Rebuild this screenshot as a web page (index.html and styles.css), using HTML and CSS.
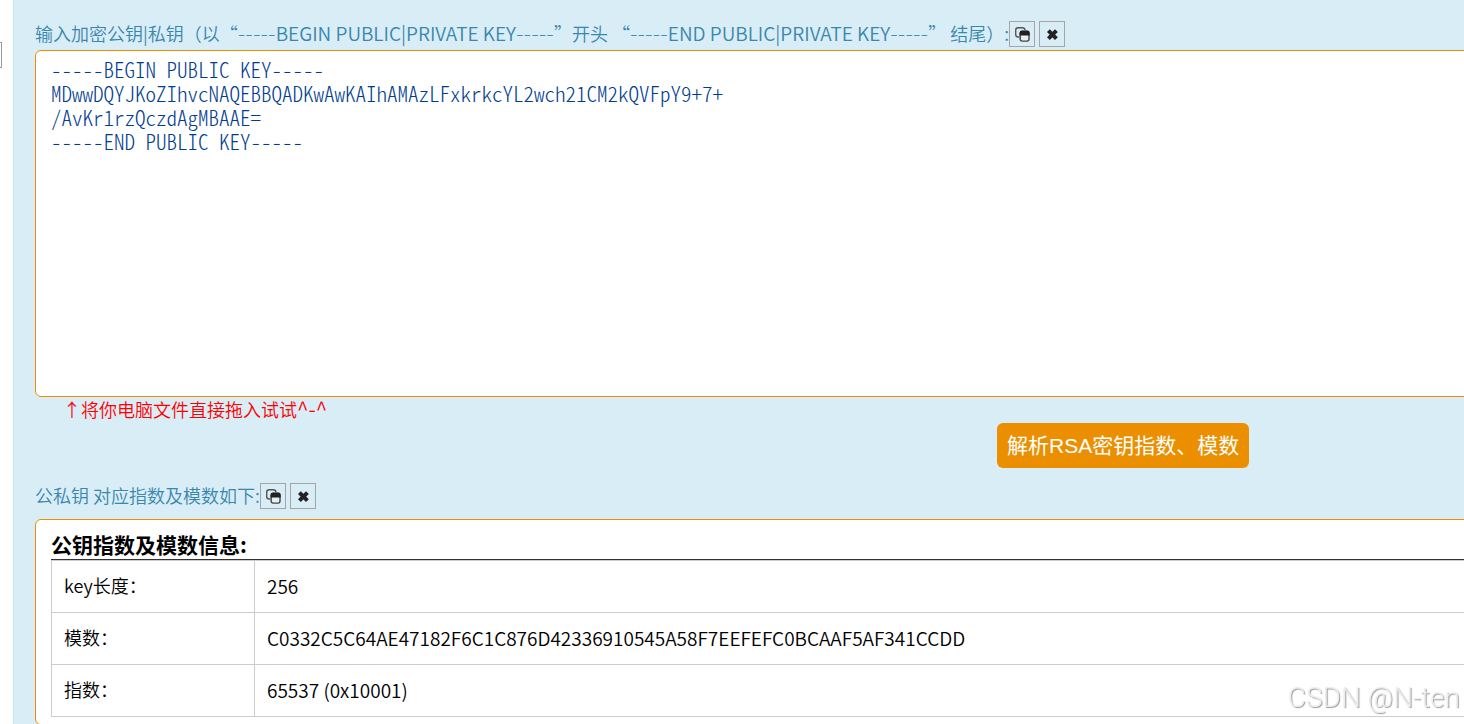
FILE: index.html
```html
<!DOCTYPE html>
<html lang="zh-CN">
<head>
<meta charset="utf-8">
<title>RSA密钥指数、模数解析</title>
<link rel="stylesheet" href="styles.css">
</head>
<body>
<svg class="symbols" aria-hidden="true">
  <symbol id="icon-copy" viewBox="0 0 16 16">
    <path d="M5.500 11H4.200Q1.700 11 1.700 8.500V4.200Q1.700 1.700 4.200 1.700H8.300Q10.800 1.700 11 4" fill="none" stroke="#555" stroke-width="1.400"/>
    <rect x="6.200" y="5.500" width="8.800" height="9.600" rx="2" fill="#e3f0f5" stroke="#444" stroke-width="1.400"/>
    <path d="M5.500 9.400V7Q5.500 4.600 7.900 4.600H13.300Q15.700 4.600 15.700 7V9.400Z" fill="#222"/>
  </symbol>
  <symbol id="icon-clear" viewBox="0 0 16 16">
    <path d="M4.400 4.600L12.400 12.600M12.400 4.600L4.400 12.600" fill="none" stroke="#222" stroke-width="4"/>
  </symbol>
</svg>
<div class="page">
  <aside class="rail"><div class="rail-box"></div></aside>
  <main class="panel">
    <div class="field-head">
      <label for="key">输入加密公钥|私钥（以“<span class="dashes">-----</span><span class="latin">BEGIN PUBLIC|PRIVATE KEY</span><span class="dashes">-----</span>”开头 “<span class="dashes">-----</span><span class="latin">END PUBLIC|PRIVATE KEY</span><span class="dashes">-----</span>” 结尾）:</label>
      <button class="tool" type="button" aria-label="复制"><svg><use href="#icon-copy"/></svg></button>
      <button class="tool" type="button" aria-label="清空"><svg><use href="#icon-clear"/></svg></button>
    </div>
    <textarea class="key-input" id="key" rows="14" spellcheck="false">-----BEGIN PUBLIC KEY-----
MDwwDQYJKoZIhvcNAQEBBQADKwAwKAIhAMAzLFxkrkcYL2wch21CM2kQVFpY9+7+
/AvKr1rzQczdAgMBAAE=
-----END PUBLIC KEY-----</textarea>
    <p class="hint">↑将你电脑文件直接拖入试试<span class="face">^-^</span></p>
    <div class="actions"><button class="submit" type="button">解析RSA密钥指数、模数</button></div>
    <div class="field-head">
      <span>公私钥 对应指数及模数如下:</span>
      <button class="tool" type="button" aria-label="复制"><svg><use href="#icon-copy"/></svg></button>
      <button class="tool" type="button" aria-label="清空"><svg><use href="#icon-clear"/></svg></button>
    </div>
    <section class="result">
      <h2>公钥指数及模数信息:</h2>
      <table>
        <tr><th scope="row">key长度：</th><td>256</td></tr>
        <tr><th scope="row">模数：</th><td>C0332C5C64AE47182F6C1C876D42336910545A58F7EEFEFC0BCAAF5AF341CCDD</td></tr>
        <tr><th scope="row">指数：</th><td>65537 (0x10001)</td></tr>
      </table>
    </section>
  </main>
</div>
<div class="watermark">CSDN @N-ten</div>
</body>
</html>
```
FILE: styles.css
```css
* { box-sizing: border-box; }
body {
  margin: 0;
  overflow: hidden;
  background: #fff;
  color: #000;
  font-family: "Noto Sans CJK SC", sans-serif;
  font-size: 18px;
  line-height: 26px;
}
.symbols { display: none; }
.page { display: flex; min-height: 100vh; overflow: hidden; }
.rail { flex: none; width: 13px; padding-top: 42px; }
.rail-box {
  width: 2px;
  height: 26px;
  border: 1px solid #999;
  border-left: 0;
}
.panel {
  flex: none;
  width: 152vw;
  padding: 21px 27px 21px 21px;
  border-left: 1px solid #bce8f1;
  background: #d9edf7;
}
.latin { font-size: 19px; line-height: 20px; }
.dashes {
  font-family: "DejaVu Sans", sans-serif;
  font-size: 21px;
  font-weight: 200;
  line-height: 20px;
}
.face { font-size: 21px; line-height: 20px; }
.field-head {
  display: flex;
  align-items: center;
  gap: 4px;
  height: 26px;
  color: #3a87ad;
  font-weight: 350;
  line-height: 24px;
  white-space: nowrap;
}
.field-head > :first-child { margin-right: -4px; padding-bottom: 2px; }
.tool {
  width: 26px;
  height: 26px;
  padding: 4px;
  border: 1px solid #a5a5a5;
  background: transparent;
}
.tool svg { display: block; width: 16px; height: 16px; }
.key-input {
  display: block;
  width: 100%;
  margin-top: 3px;
  padding: 6px 15px 3px;
  border: 1px solid #eb8f00;
  border-radius: 6px;
  outline: 0;
  resize: none;
  background: #fff;
  color: #003c8f;
  font-family: "Noto Sans CJK SC", monospace;
  font-feature-settings: "hwid";
  font-size: 21px;
  font-weight: 300;
  line-height: 24px;
}
.hint {
  height: 26px;
  margin: 0;
  padding-left: 28px;
  color: #f00;
  font-weight: 350;
  line-height: 24px;
}
.actions { display: flex; justify-content: center; }
.submit {
  padding: 8px 10px;
  border: 0;
  border-radius: 6px;
  background: #eb8f00;
  color: #fff;
  font-family: "Liberation Sans", "Noto Sans CJK SC", sans-serif;
  font-size: 21px;
  line-height: 29px;
}
.actions + .field-head { margin-top: 15px; }
.result {
  margin-top: 10px;
  padding: 10px 15px 7px;
  border: 1px solid #eb8f00;
  border-radius: 6px;
  background: #fff;
}
h2 {
  margin: 0;
  border-bottom: 1px solid #333;
  font-size: 21px;
  line-height: 29px;
}
table { width: 100%; border-collapse: collapse; }
th, td {
  padding: 11px 12px 13px;
  border: 1px solid #ccc;
  font-weight: 350;
  line-height: 27px;
  text-align: left;
}
th { width: 203px; }
td { font-size: 19px; }
.watermark {
  position: fixed;
  right: 4px;
  bottom: 8px;
  color: #eee;
  font-family: Roboto, sans-serif;
  font-size: 28px;
  font-weight: 300;
  line-height: 36px;
  text-shadow: 1px 1px 1px #999;
}
```
